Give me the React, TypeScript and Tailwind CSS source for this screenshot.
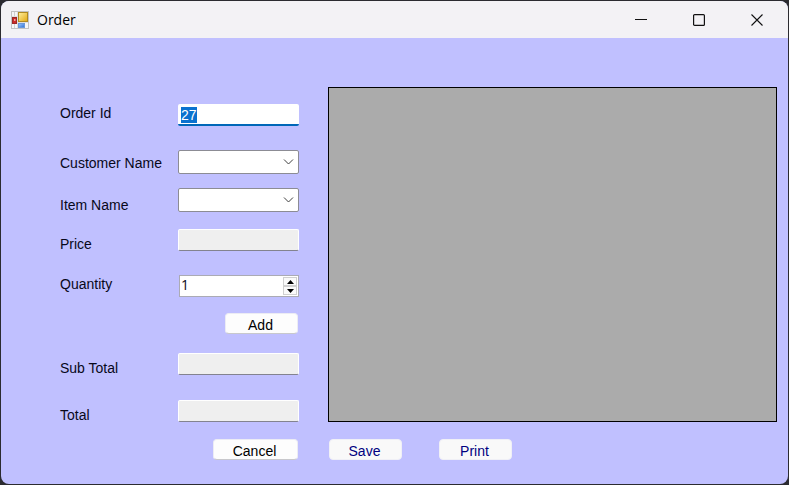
import { useEffect, useRef, useState } from "react";
import type { ReactNode } from "react";

function AppIcon() {
  return (
    <svg width="18" height="18" viewBox="0 0 18 18" aria-hidden="true">
      <defs>
        <linearGradient id="gold" x1="0" y1="0" x2="1" y2="1">
          <stop offset="0" stopColor="#fff0a0" />
          <stop offset="1" stopColor="#e2a810" />
        </linearGradient>
        <linearGradient id="blue" x1="0" y1="0" x2="1" y2="1">
          <stop offset="0" stopColor="#9cc8fa" />
          <stop offset="1" stopColor="#2f6fd6" />
        </linearGradient>
      </defs>
      <rect x="0.5" y="0.5" width="17" height="17" fill="#dedede" stroke="#c2c2c2" />
      <path d="M1 1h5v4H1zM1 13h5v4H1zM14 12h3v5h-3z" fill="#f6f6f6" />
      <path d="M3.5 1v4M3.5 13v4" stroke="#cfcfcf" />
      <rect x="7.5" y="1.5" width="9" height="9" fill="url(#gold)" stroke="#b08a20" />
      <rect x="1.5" y="6.5" width="4" height="6" fill="#cc2a26" stroke="#9c2826" />
      <path d="M3 8h1.500v2H3z" fill="#f0a09a" />
      <rect x="7.5" y="12.500" width="6" height="4" fill="url(#blue)" stroke="#6a98d8" />
    </svg>
  );
}

function Caption({ label, children }: { label: string; children: ReactNode }) {
  return (
    <button type="button" aria-label={label} className="flex h-full w-[58px] items-center justify-center hover:bg-black/5">
      <svg width="12" height="12" viewBox="0 0 12 12" fill="none" stroke="#111" aria-hidden="true">
        {children}
      </svg>
    </button>
  );
}

function Row({ id, label, className, children }: { id: string; label: string; className: string; children: ReactNode }) {
  return (
    <div className={`flex justify-between ${className}`}>
      <label htmlFor={id} className="pt-0.5 leading-[14px]">
        {label}
      </label>
      {children}
    </div>
  );
}

function Combo({ id }: { id: string }) {
  return (
    <div className="relative w-[121px]">
      <select id={id} className="block h-6 w-full appearance-none rounded-xs border border-[#8c8c94] bg-white px-1 outline-none">
        <option value=""></option>
      </select>
      <svg className="pointer-events-none absolute top-2 right-[5px]" width="11" height="8" viewBox="0 0 11 8" fill="none" stroke="#404040" aria-hidden="true">
        <path d="M1 1.5l4.5 4.5L10 1.5" />
      </svg>
    </div>
  );
}

function ReadOnlyBox({ id }: { id: string }) {
  return (
    <input
      id={id}
      readOnly
      className="h-[22px] w-[121px] rounded-xs border border-white border-b-[#83838f] bg-[#efefef] px-1 outline-none"
    />
  );
}

const darkButton = "h-[21px] rounded-sm border border-[#ececf4] border-b-[#c8c8cc] bg-[#fdfdfd] pt-[3px] pr-0.5 leading-4 text-black";
const blueButton = "h-[21px] w-[73px] rounded-sm border border-[#f0f0f6] bg-[#f9f9f9] pt-[3px] pr-0.5 leading-4 text-[#000080]";
const spinButton = "flex grow items-center justify-center border border-[#d0d0d0] bg-[#fafafa]";

export default function App() {
  const orderRef = useRef<HTMLInputElement>(null);
  const [quantity, setQuantity] = useState(1);

  useEffect(() => {
    orderRef.current?.focus();
    orderRef.current?.select();
  }, []);

  return (
    <div className="flex min-h-screen flex-col bg-[#2b2b30] p-px font-['Liberation_Sans',Arial,sans-serif] text-sm text-[#08081a]">
      <div className="flex grow flex-col overflow-hidden rounded-lg bg-[#c0c0ff]">
        <header className="flex h-[37px] items-center justify-between bg-[#f3f2f5] pr-0.5 pl-[10px]">
          <div className="flex items-center gap-2">
            <AppIcon />
            <h1 className="font-['Open_Sans',sans-serif] text-sm text-black">Order</h1>
          </div>
          <div className="flex h-full items-center">
            <Caption label="Minimize">
              <path d="M0 5.5h12" />
            </Caption>
            <Caption label="Maximize">
              <rect x="0.6" y="0.6" width="10.8" height="10.8" rx="1" strokeWidth="1.2" />
            </Caption>
            <Caption label="Close">
              <path d="M0.5 0.5l11 11M11.5 0.5l-11 11" strokeWidth="1.1" />
            </Caption>
          </div>
        </header>

        <main className="flex grow gap-[29px] pt-[49px] pr-[11px] pb-6 pl-[59px]">
          <form className="flex w-[239px] shrink-0 flex-col pt-[17px]" onSubmit={(e) => e.preventDefault()}>
            <Row id="order-id" label="Order Id" className="items-start">
              <input
                id="order-id"
                ref={orderRef}
                defaultValue="27"
                className="h-[22px] w-[121px] rounded-xs border-b-2 border-[#0067b8] bg-white px-[3px] pt-0.5 leading-4 outline-none selection:bg-[#0a72cf] selection:text-white"
              />
            </Row>
            <Row id="customer" label="Customer Name" className="mt-6 items-center">
              <Combo id="customer" />
            </Row>
            <Row id="item" label="Item Name" className="mt-[14px] items-end">
              <Combo id="item" />
            </Row>
            <Row id="price" label="Price" className="mt-[17px] items-end">
              <ReadOnlyBox id="price" />
            </Row>
            <Row id="quantity" label="Quantity" className="mt-6 items-start">
              <div className="flex h-[22px] w-[120px] border border-[#ababb4] bg-white">
                <input
                  id="quantity"
                  type="text"
                  inputMode="numeric"
                  value={quantity}
                  onChange={(e) => setQuantity(Number(e.target.value) || 0)}
                  className="min-w-0 grow bg-transparent pb-0.5 pl-px font-['Open_Sans',sans-serif] leading-4 outline-none"
                />
                <div className="mr-px flex w-[14px] shrink-0 flex-col py-px">
                  <button type="button" aria-label="Increase quantity" onClick={() => setQuantity(quantity + 1)} className={spinButton}>
                    <svg width="7" height="4" viewBox="0 0 7 4" aria-hidden="true">
                      <path d="M3.5 0L7 4H0z" />
                    </svg>
                  </button>
                  <button type="button" aria-label="Decrease quantity" onClick={() => setQuantity(Math.max(0, quantity - 1))} className={spinButton}>
                    <svg width="7" height="4" viewBox="0 0 7 4" aria-hidden="true">
                      <path d="M3.5 4L7 0H0z" />
                    </svg>
                  </button>
                </div>
              </div>
            </Row>
            <div className="mt-4 flex justify-end pr-px">
              <button type="button" className={`w-[73px] ${darkButton}`}>
                Add
              </button>
            </div>
            <Row id="sub-total" label="Sub Total" className="mt-[19px] items-end">
              <ReadOnlyBox id="sub-total" />
            </Row>
            <Row id="total" label="Total" className="mt-[25px] items-end">
              <ReadOnlyBox id="total" />
            </Row>
            <div className="mt-[17px] flex justify-end pr-px">
              <button type="button" className={`w-[85px] ${darkButton}`}>
                Cancel
              </button>
            </div>
          </form>

          <section className="flex min-w-0 grow flex-col gap-[17px]" aria-label="Order items">
            <div className="grow border border-black bg-[#ababab]" />
            <div className="flex gap-[37px] pl-px">
              <button type="button" className={blueButton}>
                Save
              </button>
              <button type="button" className={blueButton}>
                Print
              </button>
            </div>
          </section>
        </main>
      </div>
    </div>
  );
}
